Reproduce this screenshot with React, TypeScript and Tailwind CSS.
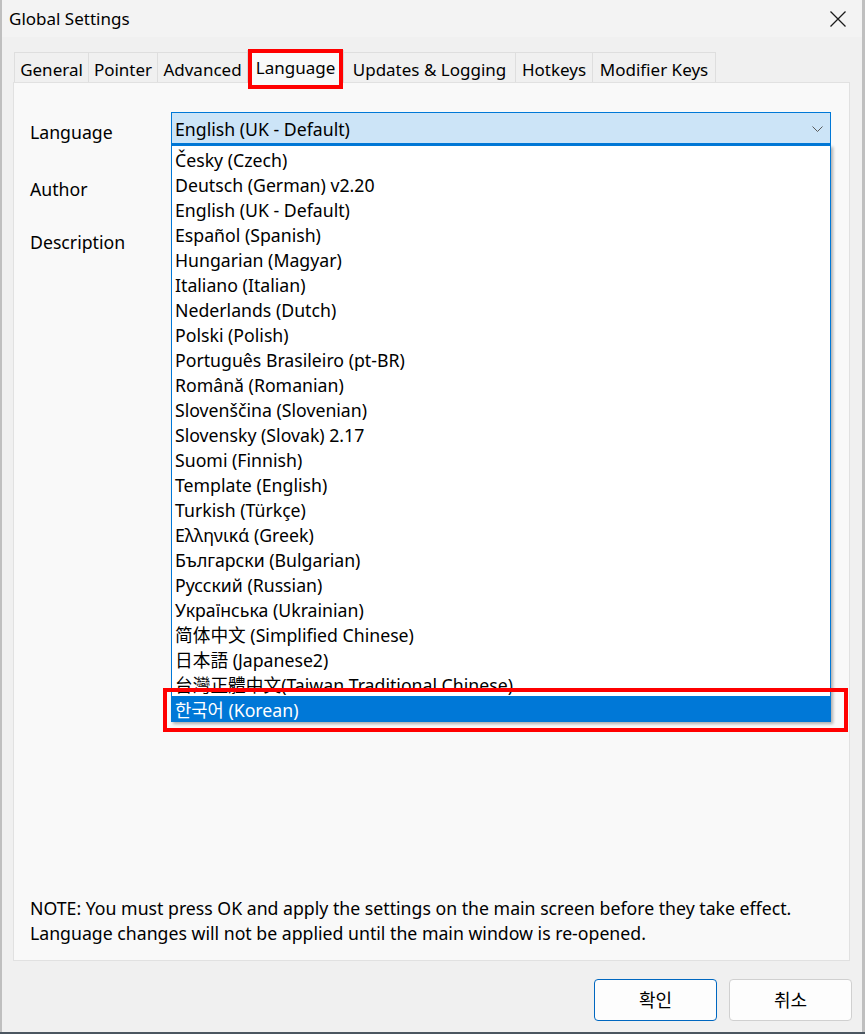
import React from "react";

const items: { label: string; font?: string; selected?: boolean }[] = [
  { label: "Česky (Czech)" },
  { label: "Deutsch (German) v2.20" },
  { label: "English (UK - Default)" },
  { label: "Español (Spanish)" },
  { label: "Hungarian (Magyar)" },
  { label: "Italiano (Italian)" },
  { label: "Nederlands (Dutch)" },
  { label: "Polski (Polish)" },
  { label: "Português Brasileiro (pt-BR)" },
  { label: "Română (Romanian)" },
  { label: "Slovenščina (Slovenian)" },
  { label: "Slovensky (Slovak) 2.17" },
  { label: "Suomi (Finnish)" },
  { label: "Template (English)" },
  { label: "Turkish (Türkçe)" },
  { label: "Ελληνικά (Greek)" },
  { label: "Български (Bulgarian)" },
  { label: "Русский (Russian)" },
  { label: "Українська (Ukrainian)" },
  { label: "简体中文 (Simplified Chinese)", font: "font-['Noto_Sans','Noto_Sans_CJK_SC',sans-serif]" },
  { label: "日本語 (Japanese2)", font: "font-['Noto_Sans','Noto_Sans_CJK_JP',sans-serif]" },
  { label: "台灣正體中文(Taiwan Traditional Chinese)", font: "font-['Noto_Sans','Noto_Sans_CJK_TC',sans-serif]" },
  { label: "한국어 (Korean)", selected: true },
];

const tabs: { label: string; w: string; active?: boolean }[] = [
  { label: "General", w: "w-[74px]" },
  { label: "Pointer", w: "w-[69px]" },
  { label: "Advanced", w: "w-[90px]" },
  { label: "Language", w: "w-[97px]", active: true },
  { label: "Updates & Logging", w: "w-[171px]" },
  { label: "Hotkeys", w: "w-[77px]" },
  { label: "Modifier Keys", w: "w-[124px]" },
];

export default function App() {
  return (
    <div className="w-[865px] h-[1034px] bg-[#bfbfbf] overflow-hidden flex flex-col font-['Noto_Sans','Noto_Sans_CJK_KR',sans-serif] text-black">
      <div className="ml-[2px] w-[860px] h-[1032px] bg-[#f0f0f0] flex flex-col">
        {/* Title bar */}
        <div className="h-[37px] bg-[#f3f3f3] flex items-center justify-between pl-[7px] pr-[16px] shrink-0">
          <span className="text-[17px] leading-none">Global Settings</span>
          <svg width="16" height="16" viewBox="0 0 16 16" className="block">
            <path d="M0.5 0.5 L15.5 15.5 M15.5 0.5 L0.5 15.5" stroke="#1a1a1a" strokeWidth="1.3" fill="none" />
          </svg>
        </div>

        {/* Body */}
        <div className="flex flex-col pl-[11px] pr-[12px] pt-[13px]">
          {/* Tabs */}
          <div className="flex items-end h-[32px] pl-[1px] relative z-10">
            {tabs.map((t, i) =>
              t.active ? (
                <div
                  key={t.label}
                  className={`${t.w} h-[33px] mb-[-1px] relative bg-[#f9f9f9] border-t border-l border-r border-[#d9d9d9] flex items-center justify-center text-[17px] pt-[1px]`}
                >
                  {t.label}
                  <div className="absolute left-0 right-0 -top-[2px] -bottom-[6px] border-[4px] border-[#ff0000] pointer-events-none" />
                </div>
              ) : (
                <div
                  key={t.label}
                  className={`${t.w} h-[30px] bg-[#f0f0f0] border-t border-[#dedede] ${i === tabs.length - 1 ? "border-r" : ""} ${i === 0 || !tabs[i - 1].active ? "border-l" : ""} flex items-center justify-center text-[17px] pt-[4px]`}
                >
                  {t.label}
                </div>
              )
            )}
          </div>

          {/* Panel */}
          <div className="h-[879px] bg-[#f9f9f9] border border-[#e1e1e1] flex flex-col pt-[29px] pl-[16px] pr-[18px] pb-[14px] text-[17.7px]">
            <div className="flex">
              <div className="w-[141px] pt-[8px] leading-[25px]">Language</div>
              <div className="relative w-[660px]">
                <div className="h-[33px] bg-[#cce4f7] border border-b-2 border-[#0078d7] flex items-center justify-between pl-[3px] pr-[7px] pt-[3px]">
                  <span className="leading-[25px]">English (UK - Default)</span>
                  <svg width="11" height="6" viewBox="0 0 11 6" className="block -mt-[2px]">
                    <polyline points="0.5,0.5 5.5,5.5 10.5,0.5" stroke="#5a5a5a" strokeWidth="1" fill="none" />
                  </svg>
                </div>
                <div className="absolute left-0 top-full w-[660px] bg-white border border-[#0078d7] shadow-[2px_2px_3px_rgba(0,0,0,0.3)] z-20">
                  {items.map((it) => (
                    <div
                      key={it.label}
                      className={`h-[25px] flex items-center pl-[3px] pt-[3px] leading-[22px] whitespace-nowrap relative ${it.font ?? ""} ${it.selected ? "bg-[#0078d7] text-white" : ""}`}
                    >
                      {it.label}
                      {it.selected && (
                        <div className="absolute -left-[9px] -right-[18px] -top-[8px] -bottom-[11px] border-[4px] border-[#ff0000] pointer-events-none" />
                      )}
                    </div>
                  ))}
                </div>
              </div>
            </div>
            <div className="mt-[32px] leading-[25px]">Author</div>
            <div className="mt-[28px] leading-[25px]">Description</div>

            <div className="mt-auto leading-[25px]">
              <div>NOTE: You must press OK and apply the settings on the main screen before they take effect.</div>
              <div>Language changes will not be applied until the main window is re-opened.</div>
            </div>
          </div>

          {/* Buttons */}
          <div className="flex justify-end gap-[12px] mt-[18px] mr-[-2px]">
            <button className="w-[123px] h-[42px] rounded-[4px] border border-[#0067c0] bg-[#fdfdfd] text-[18px] flex items-center justify-center">
              확인
            </button>
            <button className="w-[123px] h-[42px] rounded-[4px] border border-[#d0d0d0] bg-[#fdfdfd] text-[18px] flex items-center justify-center">
              취소
            </button>
          </div>
        </div>
      </div>
      <div className="h-[2px] bg-[#4b5660]" />
    </div>
  );
}
